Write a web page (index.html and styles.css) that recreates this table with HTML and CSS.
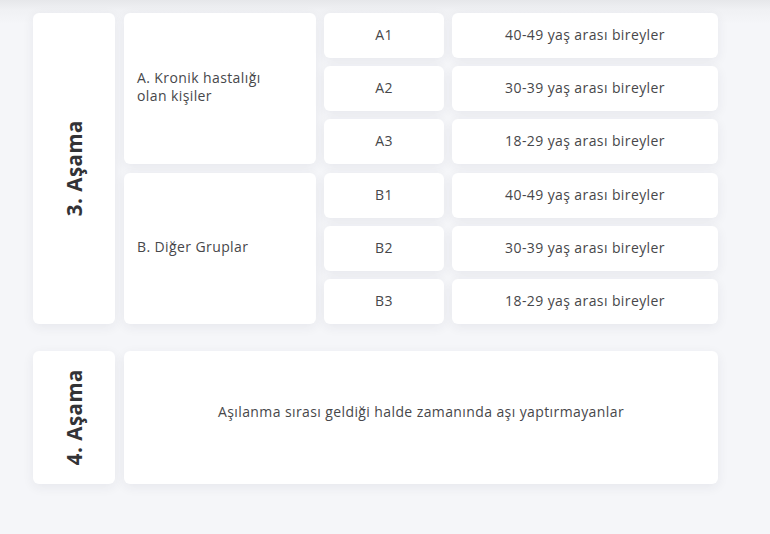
FILE: index.html
```html
<!DOCTYPE html>
<html lang="tr">
<head>
<meta charset="utf-8">
<link rel="stylesheet" href="styles.css">
</head>
<body>
<div class="page">
  <section class="stage">
    <div class="card stage-label"><span>3. Aşama</span></div>
    <div class="groups">
      <div class="group">
        <div class="card group-name"><p>A. Kronik hastalığı<br>olan kişiler</p></div>
        <div class="rows">
          <div class="row"><div class="card code">A1</div><div class="card desc">40-49 yaş arası bireyler</div></div>
          <div class="row"><div class="card code">A2</div><div class="card desc">30-39 yaş arası bireyler</div></div>
          <div class="row"><div class="card code">A3</div><div class="card desc">18-29 yaş arası bireyler</div></div>
        </div>
      </div>
      <div class="group">
        <div class="card group-name"><p>B. Diğer Gruplar</p></div>
        <div class="rows">
          <div class="row"><div class="card code">B1</div><div class="card desc">40-49 yaş arası bireyler</div></div>
          <div class="row"><div class="card code">B2</div><div class="card desc">30-39 yaş arası bireyler</div></div>
          <div class="row"><div class="card code">B3</div><div class="card desc">18-29 yaş arası bireyler</div></div>
        </div>
      </div>
    </div>
  </section>
  <section class="stage stage4">
    <div class="card stage-label"><span>4. Aşama</span></div>
    <div class="card wide">Aşılanma sırası geldiği halde zamanında aşı yaptırmayanlar</div>
  </section>
</div>
</body>
</html>
```
FILE: styles.css
```css
html, body {
  margin: 0;
  padding: 0;
}
body {
  width: 770px;
  height: 534px;
  overflow: hidden;
  background: linear-gradient(#e6e7ea 0px, #f0f1f4 10px, #f5f6f9 24px, #f5f6f9 100%);
  font-family: "Open Sans", "Liberation Sans", sans-serif;
  color: #47474a;
  font-size: 14px;
  letter-spacing: 0.4px;
}
.page {
  padding: 13px 0 0 33px;
  display: flex;
  flex-direction: column;
  gap: 27px;
}
.stage {
  display: flex;
  gap: 9px;
}
.card {
  background: #fff;
  border-radius: 6px;
  box-shadow: 0 3px 12px rgba(40, 45, 70, 0.07);
}
.stage-label {
  width: 82px;
  display: flex;
  align-items: center;
  justify-content: center;
}
.stage-label span {
  writing-mode: vertical-rl;
  transform: rotate(180deg);
  font-weight: 700;
  font-size: 20.5px;
  color: #333336;
  letter-spacing: 0.5px;
}
.groups {
  display: flex;
  flex-direction: column;
  gap: 9px;
}
.group {
  display: flex;
  gap: 8px;
}
.group-name {
  width: 192px;
  box-sizing: border-box;
  padding: 0 13px 3px;
  display: flex;
  align-items: center;
}
.group-name p {
  margin: 0;
  line-height: 18px;
}
.rows {
  display: flex;
  flex-direction: column;
  gap: 8px;
}
.row {
  display: flex;
  gap: 8px;
  height: 45px;
}
.code {
  width: 120px;
  display: flex;
  align-items: center;
  justify-content: center;
  padding-bottom: 3px;
  box-sizing: border-box;
}
.desc {
  width: 266px;
  display: flex;
  align-items: center;
  justify-content: center;
  padding-bottom: 3px;
  box-sizing: border-box;
}
.stage4 .stage-label, .stage4 .wide {
  height: 133px;
}
.wide {
  width: 594px;
  display: flex;
  align-items: center;
  justify-content: center;
  padding-bottom: 12px;
  box-sizing: border-box;
}
```
